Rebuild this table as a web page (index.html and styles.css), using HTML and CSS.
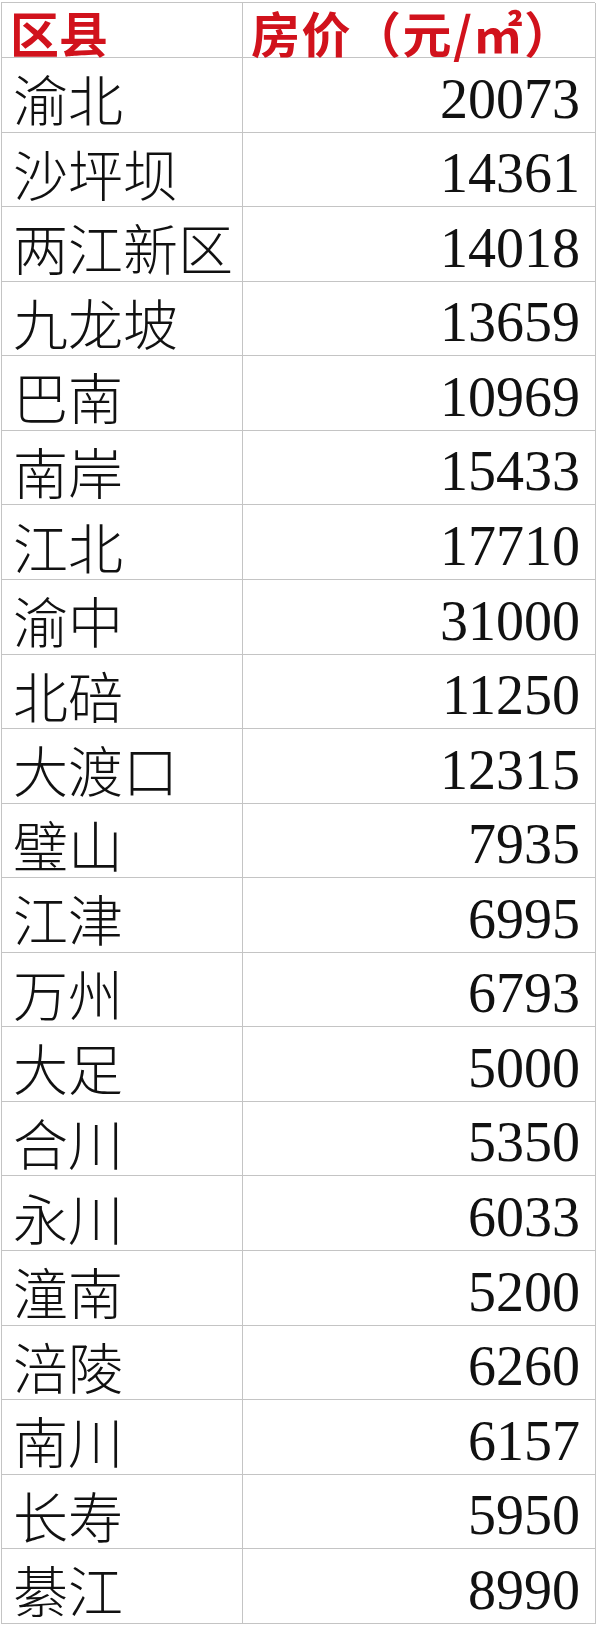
FILE: index.html
```html
<!DOCTYPE html>
<html lang="zh-CN">
<head>
<meta charset="utf-8">
<title>区县房价</title>
<link rel="stylesheet" href="styles.css">
</head>
<body>
<div class="sheet">
  <div class="cell head name">区县</div>
  <div class="cell head price">房价（元/㎡）</div>
  <div class="cell name">渝北</div><div class="cell num">20073</div>
  <div class="cell name">沙坪坝</div><div class="cell num">14361</div>
  <div class="cell name">两江新区</div><div class="cell num">14018</div>
  <div class="cell name">九龙坡</div><div class="cell num">13659</div>
  <div class="cell name">巴南</div><div class="cell num">10969</div>
  <div class="cell name">南岸</div><div class="cell num">15433</div>
  <div class="cell name">江北</div><div class="cell num">17710</div>
  <div class="cell name">渝中</div><div class="cell num">31000</div>
  <div class="cell name">北碚</div><div class="cell num">11250</div>
  <div class="cell name">大渡口</div><div class="cell num">12315</div>
  <div class="cell name">璧山</div><div class="cell num">7935</div>
  <div class="cell name">江津</div><div class="cell num">6995</div>
  <div class="cell name">万州</div><div class="cell num">6793</div>
  <div class="cell name">大足</div><div class="cell num">5000</div>
  <div class="cell name">合川</div><div class="cell num">5350</div>
  <div class="cell name">永川</div><div class="cell num">6033</div>
  <div class="cell name">潼南</div><div class="cell num">5200</div>
  <div class="cell name">涪陵</div><div class="cell num">6260</div>
  <div class="cell name">南川</div><div class="cell num">6157</div>
  <div class="cell name">长寿</div><div class="cell num">5950</div>
  <div class="cell name">綦江</div><div class="cell num">8990</div>
</div>
</body>
</html>
```

FILE: styles.css
```css
html, body {
  margin: 0;
  padding: 0;
  background: #ffffff;
}

body {
  padding: 2px 0 0 1px;
}

.sheet {
  display: grid;
  grid-template-columns: 241px 353px;
  grid-template-rows: 55px repeat(21, 74.57px);
  border-top: 1px solid #c4c4c4;
  border-left: 1px solid #c4c4c4;
  width: 594px;
  box-sizing: border-box;
  color: #111111;
}

.cell {
  box-sizing: border-box;
  border-right: 1px solid #c4c4c4;
  border-bottom: 1px solid #c4c4c4;
  display: flex;
  align-items: center;
  white-space: nowrap;
}

.name {
  padding: 6px 0 0 11px;
  font-family: "Noto Sans CJK SC", sans-serif;
  font-weight: 300;
  font-size: 55px;
  line-height: 1.15;
}

.num {
  justify-content: flex-end;
  padding: 8px 15px 0 0;
  font-family: "Liberation Serif", serif;
  font-size: 56px;
  line-height: 1.15;
}

.head {
  color: #d1121c;
  font-family: "Noto Sans CJK SC", sans-serif;
  font-weight: 700;
  font-size: 49px;
  line-height: 1;
  padding: 2px 0 0 8px;
}

.head.price {
  padding-left: 8px;
  letter-spacing: 1.5px;
}
```
